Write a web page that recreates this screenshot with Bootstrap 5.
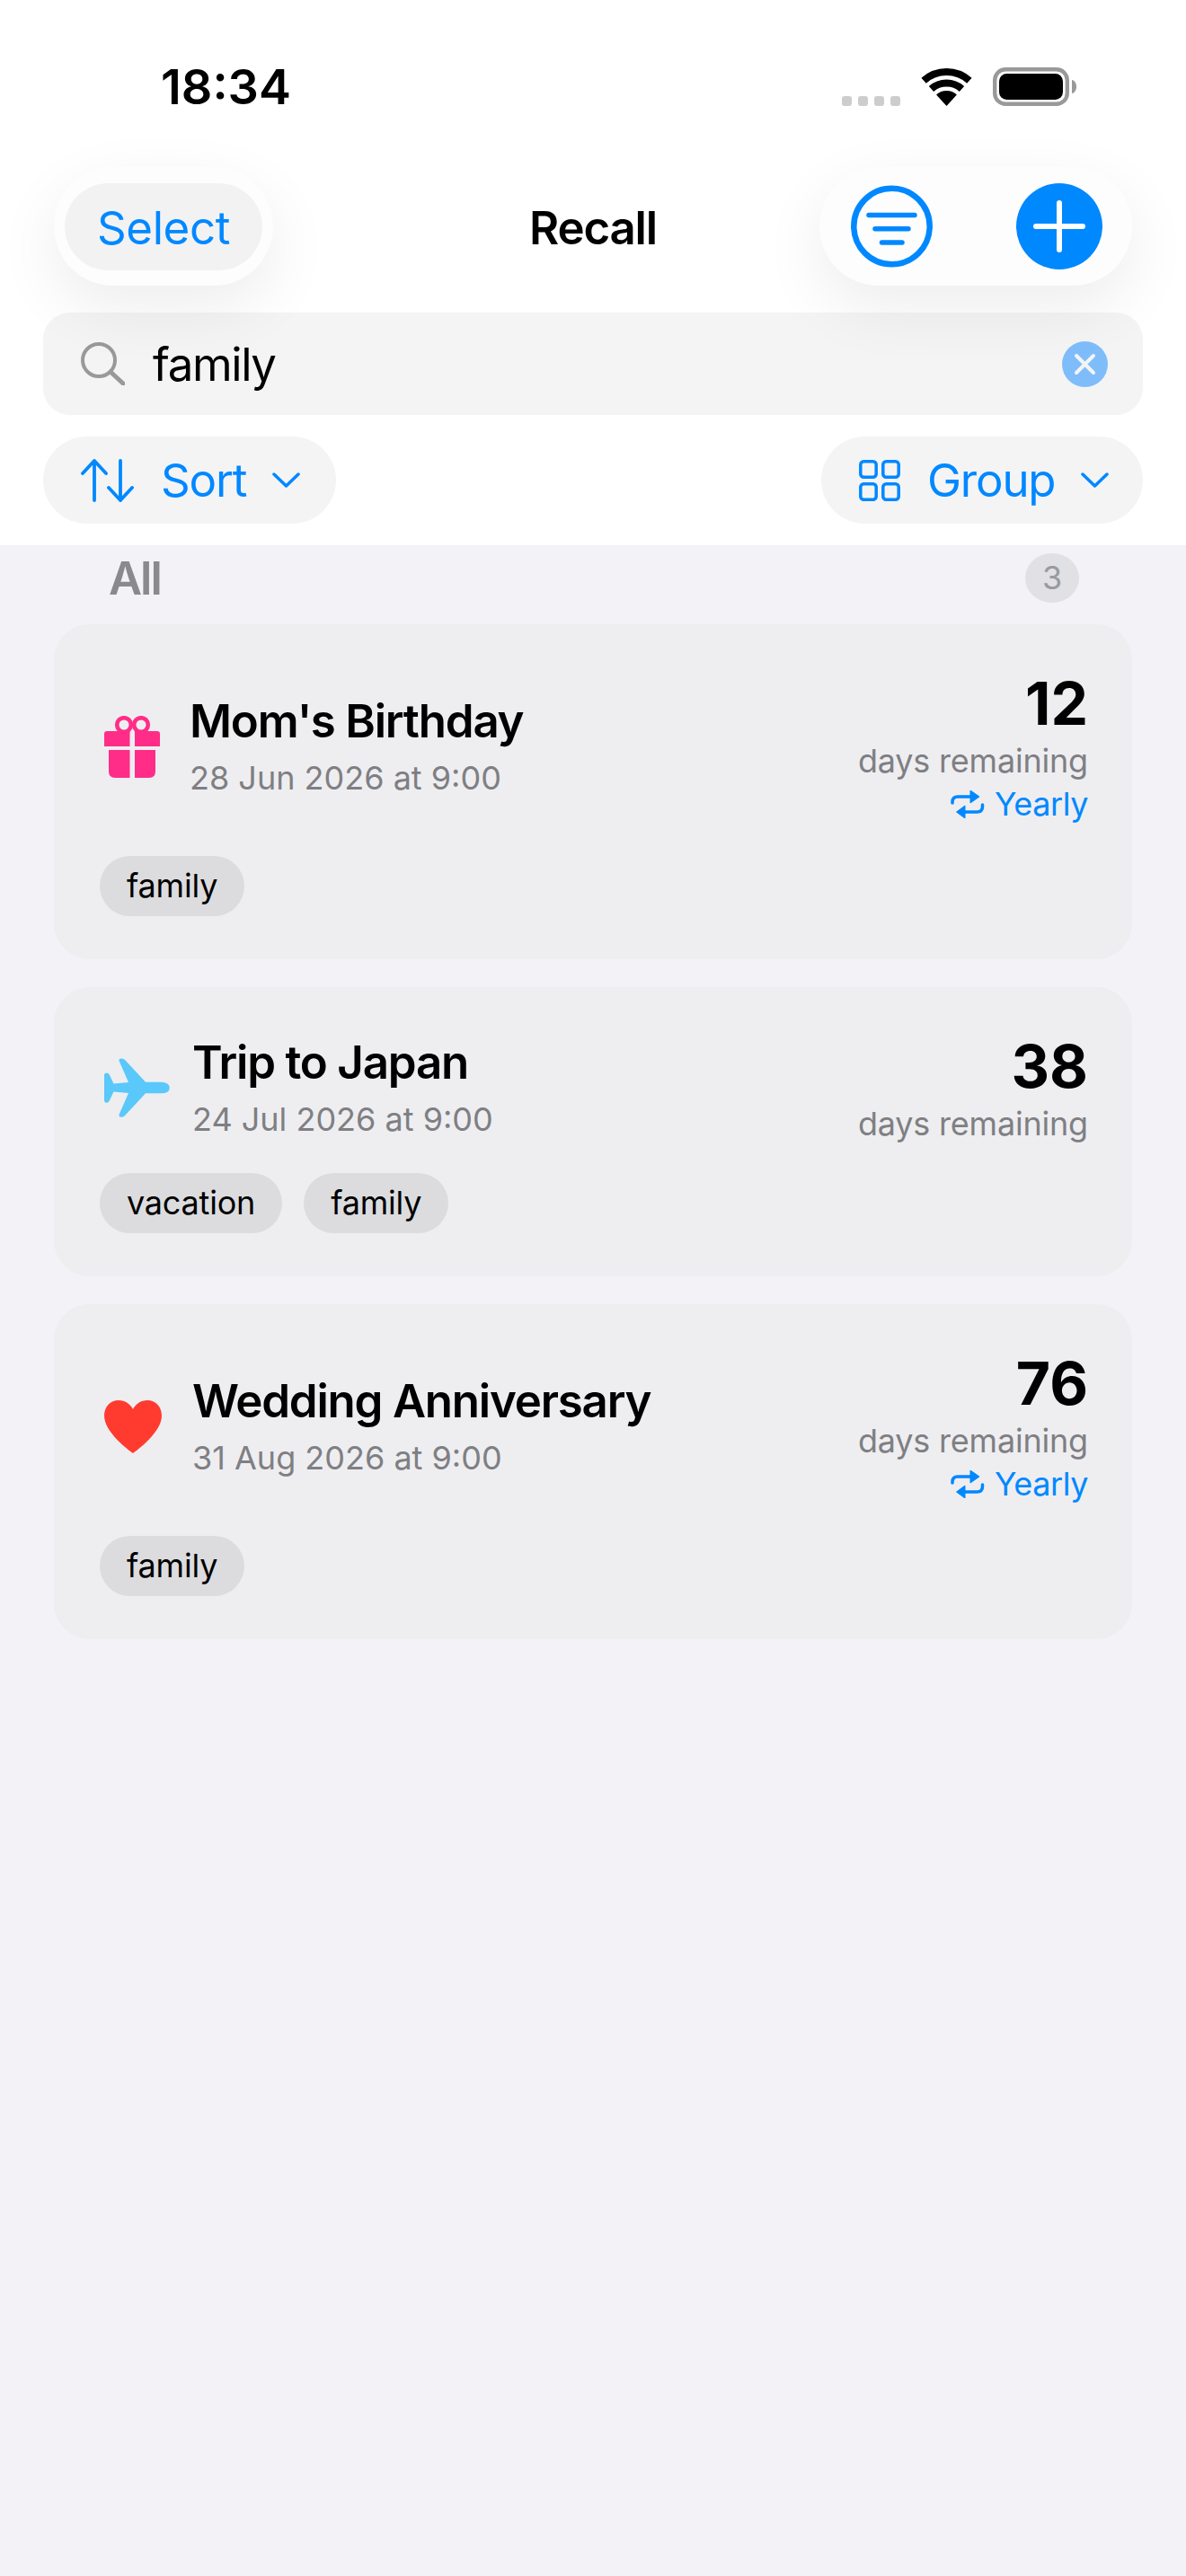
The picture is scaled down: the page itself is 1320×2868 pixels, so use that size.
<!DOCTYPE html>
<html lang="en">
<head>
    <meta charset="UTF-8">
    <meta name="viewport" content="width=device-width, initial-scale=1.0">
    <title>Recall</title>
    <link href="https://cdn.jsdelivr.net/npm/bootstrap@5.3.0/dist/css/bootstrap.min.css" rel="stylesheet">
    <style>
        body {
            font-family: Inter, "Liberation Sans", sans-serif;
            background: #f2f2f7;
            color: #000;
            min-height: 100vh;
        }
        .top-area {
            background: #fff;
            height: 607px;
            padding: 0 48px;
        }
        .status-row {
            height: 186px;
            padding: 62px 122px 0 179px;
            margin: 0 -48px;
        }
        .clock {
            font-size: 54px;
            font-weight: 600;
            line-height: 70px;
        }
        .status-icons { gap: 23px; height: 56px; }
        .signal-dots { gap: 7px; }
        .signal-dots span {
            width: 11px;
            height: 11px;
            border-radius: 3px;
            background: #cdcdcd;
        }
        .nav-row {
            display: grid;
            grid-template-columns: 1fr auto 1fr;
            align-items: center;
            margin: 0 12px;
            position: relative;
            z-index: 2;
        }
        .glass-pill {
            height: 132px;
            background: #fdfdfd;
            border-radius: 66px;
            box-shadow: 0 24px 70px rgba(0, 0, 0, 0.075);
        }
        .select-pill { width: 244px; padding: 18px 12px; justify-self: start; }
        .select-inner {
            display: flex;
            width: 100%;
            height: 97px;
            align-items: center;
            justify-content: center;
            background: #f2f2f3;
            border-radius: 49px;
            border: 0;
            color: #0088ff;
            font-size: 51px;
            letter-spacing: -0.4px;
            padding: 3px 0 0;
        }
        .screen-title { font-size: 51px; font-weight: 600; line-height: 1; letter-spacing: -1.2px; padding-top: 2px; }
        .action-pill { width: 348px; padding: 0 33px 0 35px; justify-self: end; }
        .search-field {
            height: 114px;
            margin-top: 30px;
            padding: 0 39px 0 42px;
            background: #f4f4f5;
            border-radius: 30px;
        }
        .search-field .query { font-size: 51px; margin-left: 31px; line-height: 1; letter-spacing: -1.4px; }
        .tool-row { margin-top: 24px; }
        .tool-pill {
            height: 97px;
            background: #f4f4f5;
            border: 0;
            border-radius: 49px;
            color: #0088ff;
            font-size: 51px;
            letter-spacing: -1.2px;
            padding: 0;
        }
        .sort-pill { width: 326px; padding-left: 42px; }
        .group-pill { width: 358px; padding-left: 42px; }
        .tool-label { margin: 2px 29px 0 30px; }
        .section-row {
            height: 87px;
            padding: 9px 119px 0 121px;
        }
        .section-name { font-size: 51px; font-weight: 600; color: #8a8a8e; line-height: 55px; letter-spacing: -2px; }
        .count-dot {
            width: 60px;
            height: 55px;
            padding: 0;
            border-radius: 50%;
            background: #e0e0e5;
            color: #9a9aa0;
            font-size: 36px;
            font-weight: 400;
            line-height: 55px;
        }
        .event-list { padding: 1px 60px 0; gap: 31px; }
        .event-card {
            background: #eeeef1;
            border: 0;
            border-radius: 40px;
            padding: 48px 49px 48px 51px;
        }
        .event-icon { flex: none; }
        .icon-gift { margin: 0 33px 0 5px; }
        .icon-plane { margin: 0 25px 0 5px; }
        .icon-heart { margin: 0 34px 0 5px; }
        .event-name { font-size: 51px; font-weight: 600; line-height: 62px; letter-spacing: -1.2px; }
        .event-date { font-size: 36px; color: #7f7f83; line-height: 50px; margin-top: 7px; }
        .days-num { font-size: 66px; font-weight: 700; line-height: 80px; }
        .days-label { font-size: 36px; color: #7f7f83; line-height: 48px; letter-spacing: -0.2px; }
        .repeat-label { font-size: 36px; color: #0088ff; line-height: 49px; gap: 11px; letter-spacing: -0.4px; }
        .tag-row { margin-top: 33px; gap: 24px; }
        .tag-row-tight { margin-top: 31px; }
        .tag-pill {
            height: 67px;
            padding: 0 30px;
            border-radius: 34px;
            background: #dcdcdf;
            font-size: 36px;
            line-height: 67px;
            letter-spacing: -0.2px;
            color: #000;
        }
    </style>
</head>
<body>
    <div class="top-area">
        <div class="status-row d-flex justify-content-between align-items-start">
            <div class="clock">18:34</div>
            <div class="status-icons d-flex align-items-end">
                <div class="signal-dots d-flex"><span></span><span></span><span></span><span></span></div>
                <svg width="57" height="42" viewBox="0 0 57 42">
                    <path d="M3.1 13.8A38 38 0 0 1 53.9 13.8" fill="none" stroke="#000" stroke-width="8"/>
                    <path d="M11.5 23A25.5 25.5 0 0 1 45.5 23" fill="none" stroke="#000" stroke-width="8"/>
                    <path d="M28.5 42L17.1 29.4A17 17 0 0 1 39.9 29.4Z"/>
                </svg>
                <svg width="93" height="43" viewBox="0 0 93 43">
                    <rect x="2.2" y="2.2" width="80.6" height="38.6" rx="12" fill="none" stroke="#999" stroke-width="4.4"/>
                    <rect x="7" y="7" width="71" height="29" rx="8.5"/>
                    <path d="M88 14c3 .6 5 3.5 5 7.5s-2 6.900-5 7.500z" fill="#999"/>
                </svg>
            </div>
        </div>

        <div class="nav-row">
            <div class="glass-pill select-pill">
                <button class="btn select-inner" type="button">Select</button>
            </div>
            <div class="screen-title">Recall</div>
            <div class="glass-pill action-pill d-flex align-items-center justify-content-between">
                <svg width="91" height="92" viewBox="0 0 91 92">
                    <circle cx="45.500" cy="46" r="42.200" fill="none" stroke="#0088ff" stroke-width="6.500"/>
                    <path d="M20 33.500H71M27 48.700H64M34.500 64H57" fill="none" stroke="#0088ff" stroke-width="5.500" stroke-linecap="round"/>
                </svg>
                <svg width="96" height="96" viewBox="0 0 96 96">
                    <circle cx="48" cy="48" r="48" fill="#0088ff"/>
                    <path d="M22 48H74M48 22V74" fill="none" stroke="#fff" stroke-width="6" stroke-linecap="round"/>
                </svg>
            </div>
        </div>

        <div class="search-field d-flex align-items-center">
            <svg width="49" height="48" viewBox="0 0 49 48">
                <circle cx="20" cy="20" r="18" fill="none" stroke="#999" stroke-width="4"/>
                <path d="M33 33L47 46" fill="none" stroke="#999" stroke-width="5" stroke-linecap="round"/>
            </svg>
            <span class="query flex-grow-1">family</span>
            <svg width="51" height="51" viewBox="0 0 51 51">
                <circle cx="25.500" cy="25.500" r="25.500" fill="#7fbdfa"/>
                <path d="M16 16L35 35M35 16L16 35" fill="none" stroke="#f4f4f5" stroke-width="4" stroke-linecap="round"/>
            </svg>
        </div>

        <div class="tool-row d-flex justify-content-between">
            <button class="btn tool-pill sort-pill d-flex align-items-center" type="button">
                <svg width="59" height="48" viewBox="0 0 59 48">
                    <path d="M15 2V46M2 16L15 2L28 16M44 2V46M31 32L44 46L57 32" fill="none" stroke="#0088ff" stroke-width="3.800" stroke-linecap="round" stroke-linejoin="round"/>
                </svg>
                <span class="tool-label">Sort</span>
                <svg width="31" height="17" viewBox="0 0 31 17">
                    <path d="M2 2L15.500 15L29 2" fill="none" stroke="#0088ff" stroke-width="3.500" stroke-linecap="round" stroke-linejoin="round"/>
                </svg>
            </button>
            <button class="btn tool-pill group-pill d-flex align-items-center" type="button">
                <svg width="46" height="46" viewBox="0 0 46 46">
                    <g fill="none" stroke="#0088ff" stroke-width="3.500">
                        <rect x="1.800" y="1.800" width="17.400" height="17.400" rx="3.500"/>
                        <rect x="26.800" y="1.800" width="17.400" height="17.400" rx="3.500"/>
                        <rect x="1.800" y="26.800" width="17.400" height="17.400" rx="3.500"/>
                        <rect x="26.800" y="26.800" width="17.400" height="17.400" rx="3.500"/>
                    </g>
                </svg>
                <span class="tool-label">Group</span>
                <svg width="31" height="17" viewBox="0 0 31 17">
                    <path d="M2 2L15.500 15L29 2" fill="none" stroke="#0088ff" stroke-width="3.500" stroke-linecap="round" stroke-linejoin="round"/>
                </svg>
            </button>
        </div>
    </div>

    <div class="section-row d-flex justify-content-between align-items-start">
        <span class="section-name">All</span>
        <span class="badge count-dot">3</span>
    </div>

    <div class="event-list d-flex flex-column">
        <div class="card event-card">
            <div class="d-flex justify-content-between align-items-center">
                <div class="d-flex align-items-center">
                    <svg class="event-icon icon-gift" width="62" height="70" viewBox="0 0 62 70">
                        <circle cx="22" cy="10" r="7.800" fill="none" stroke="#ff2d87" stroke-width="4.600"/>
                        <circle cx="41" cy="10" r="7.800" fill="none" stroke="#ff2d87" stroke-width="4.600"/>
                        <path d="M3 17H28.500V34H0V20Q0 17 3 17ZM34 17H59Q62 17 62 20V34H34ZM5 38H28.500V69H12Q5 69 5 62ZM34 38H57V62Q57 69 50 69H34Z" fill="#ff2d87"/>
                    </svg>
                    <div>
                        <div class="event-name">Mom's Birthday</div>
                        <div class="event-date">28 Jun 2026 at 9:00</div>
                    </div>
                </div>
                <div class="text-end">
                    <div class="days-num">12</div>
                    <div class="days-label">days remaining</div>
                    <div class="repeat-label d-flex align-items-center justify-content-end">
                        <svg width="38" height="31" viewBox="0 0 38 31">
                            <path d="M2 14V13Q2 7 8 7H24M35.500 16V18Q35.500 24 29.500 24H14" fill="none" stroke="#0088ff" stroke-width="3.500" stroke-linecap="round"/>
                            <path d="M22 0L32 7L22 14ZM16 17L6.500 24L16 31Z" fill="#0088ff" stroke="#0088ff" stroke-linejoin="round"/>
                        </svg>
                        <span>Yearly</span>
                    </div>
                </div>
            </div>
            <div class="tag-row d-flex">
                <span class="tag-pill">family</span>
            </div>
        </div>

        <div class="card event-card">
            <div class="d-flex justify-content-between align-items-center">
                <div class="d-flex align-items-center">
                    <svg class="event-icon icon-plane" width="73" height="66" viewBox="0 0 73 66">
                        <path d="M0 19Q0 16.500 3 16.500Q5 16.500 6 19L10.500 28.500L27 27L16.500 3Q16 .5 19 .5Q22 .5 23.500 2.500L46 26.700H63Q72.800 27 72.800 33Q72.800 39.300 63 39.300H46L23.500 63.500Q22 65.800 19 65.800Q16 65.800 16.500 63L27 39L10.500 37.500L6 47Q5 49.700 3 49.700Q0 49.700 0 47Z" fill="#5ac8fa"/>
                    </svg>
                    <div>
                        <div class="event-name">Trip to Japan</div>
                        <div class="event-date">24 Jul 2026 at 9:00</div>
                    </div>
                </div>
                <div class="text-end">
                    <div class="days-num">38</div>
                    <div class="days-label">days remaining</div>
                </div>
            </div>
            <div class="tag-row tag-row-tight d-flex">
                <span class="tag-pill">vacation</span>
                <span class="tag-pill">family</span>
            </div>
        </div>

        <div class="card event-card">
            <div class="d-flex justify-content-between align-items-center">
                <div class="d-flex align-items-center">
                    <svg class="event-icon icon-heart" width="64" height="59" viewBox="0 0 64 59">
                        <path d="M32 59C28 56 0 36 0 17C0 7 7 0 16 0C23 0 29 4 32 10C35 4 41 0 48 0C57 0 64 7 64 17C64 36 36 56 32 59Z" fill="#ff3b30"/>
                    </svg>
                    <div>
                        <div class="event-name">Wedding Anniversary</div>
                        <div class="event-date">31 Aug 2026 at 9:00</div>
                    </div>
                </div>
                <div class="text-end">
                    <div class="days-num">76</div>
                    <div class="days-label">days remaining</div>
                    <div class="repeat-label d-flex align-items-center justify-content-end">
                        <svg width="38" height="31" viewBox="0 0 38 31">
                            <path d="M2 14V13Q2 7 8 7H24M35.500 16V18Q35.500 24 29.500 24H14" fill="none" stroke="#0088ff" stroke-width="3.500" stroke-linecap="round"/>
                            <path d="M22 0L32 7L22 14ZM16 17L6.500 24L16 31Z" fill="#0088ff" stroke="#0088ff" stroke-linejoin="round"/>
                        </svg>
                        <span>Yearly</span>
                    </div>
                </div>
            </div>
            <div class="tag-row d-flex">
                <span class="tag-pill">family</span>
            </div>
        </div>
    </div>

    <script src="https://cdn.jsdelivr.net/npm/bootstrap@5.3.0/dist/js/bootstrap.bundle.min.js"></script>
</body>
</html>
